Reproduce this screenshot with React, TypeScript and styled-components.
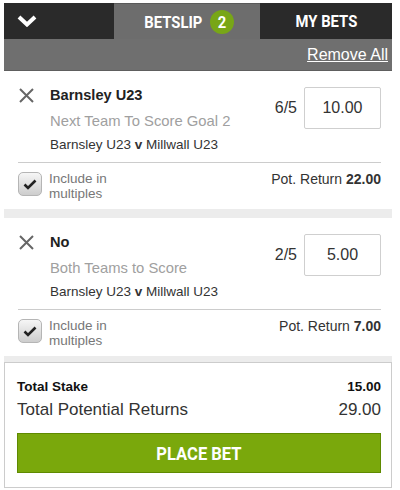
import styled, { createGlobalStyle } from 'styled-components'

const GlobalStyle = createGlobalStyle`
  body {
    margin: 0;
    background: #ffffff;
    font-family: 'Liberation Sans', Arial, sans-serif;
  }
`

type Bet = {
  selection: string
  market: string
  home: string
  away: string
  odds: string
  stake: string
  potReturn: string
}

const bets: Bet[] = [
  {
    selection: 'Barnsley U23',
    market: 'Next Team To Score Goal 2',
    home: 'Barnsley U23',
    away: 'Millwall U23',
    odds: '6/5',
    stake: '10.00',
    potReturn: '22.00',
  },
  {
    selection: 'No',
    market: 'Both Teams to Score',
    home: 'Barnsley U23',
    away: 'Millwall U23',
    odds: '2/5',
    stake: '5.00',
    potReturn: '7.00',
  },
]

const Page = styled.div`
  padding: 3px 8px 2px 4px;
`

const Slip = styled.div`
  display: flex;
  flex-direction: column;
  background: #ececec;
`

const TabBar = styled.div`
  display: flex;
  height: 36px;
  background: #2a2a2a;
`

const Collapse = styled.div`
  width: 110px;
  display: flex;
  align-items: center;
  padding-left: 13px;
  box-sizing: border-box;
`

const Tab = styled.div<{ $active?: boolean }>`
  display: flex;
  align-items: center;
  justify-content: center;
  gap: 4px;
  width: ${(p) => (p.$active ? '146px' : '132px')};
  background: ${(p) => (p.$active ? '#6d6d6d' : 'transparent')};
  color: #ffffff;
  font-family: 'Roboto', 'Liberation Sans', sans-serif;
  font-weight: bold;
  font-size: 17px;
  border-top: ${(p) => (p.$active ? '1px solid #5a5a5a' : 'none')};
`

// the reference uses a condensed face, squeeze Roboto to match
const Narrow = styled.span`
  display: inline-block;
  transform: scaleX(0.87);
`

const Badge = styled.span`
  display: inline-flex;
  align-items: center;
  justify-content: center;
  width: 24px;
  height: 24px;
  border-radius: 50%;
  background: #78a617;
  font-size: 17px;
`

const ActionBar = styled.div`
  display: flex;
  justify-content: flex-end;
  align-items: center;
  height: 31px;
  padding-right: 4px;
  background: #6f6f6f;
  border-bottom: 1px solid #5e5e5e;
`

const RemoveAll = styled.a`
  color: #ffffff;
  font-size: 16px;
  text-decoration: underline;
  cursor: pointer;
`

const Card = styled.div`
  background: #ffffff;
  padding: 16px 11px 0 14px;
  height: 138px;
  box-sizing: border-box;
  & + & {
    margin-top: 9px;
  }
`

const BetTop = styled.div`
  display: flex;
  align-items: flex-start;
  padding-bottom: 9px;
  border-bottom: 1px solid #cccccc;
`

const RemoveBtn = styled.div`
  width: 32px;
  padding-top: 1px;
  padding-left: 1px;
  box-sizing: border-box;
`

const Info = styled.div`
  flex: 1;
  display: flex;
  flex-direction: column;
`

const Selection = styled.div`
  font-weight: bold;
  font-size: 14.6px;
  color: #222222;
  line-height: 17px;
`

const Market = styled.div`
  margin-top: 8px;
  font-size: 14.8px;
  color: #a0a0a0;
  line-height: 18px;
`

const Match = styled.div`
  margin-top: 6px;
  font-size: 13.5px;
  color: #333333;
  line-height: 17px;
  b {
    font-weight: bold;
  }
`

const Price = styled.div`
  display: flex;
  align-items: center;
  gap: 7px;
`

const Odds = styled.span`
  font-size: 16px;
  color: #333333;
`

const StakeBox = styled.div`
  width: 77px;
  height: 42px;
  box-sizing: border-box;
  border: 1px solid #cfcfcf;
  border-radius: 2px;
  display: flex;
  align-items: center;
  justify-content: center;
  font-size: 16px;
  color: #333333;
`

const BetBottom = styled.div`
  display: flex;
  justify-content: space-between;
  align-items: flex-start;
  padding-top: 8px;
`

const Multiples = styled.label`
  display: flex;
  align-items: flex-start;
  gap: 7px;
  font-size: 13.5px;
  line-height: 15px;
  color: #777777;
`

const CheckBox = styled.span`
  margin-top: 1px;
  width: 24px;
  height: 24px;
  box-sizing: border-box;
  border: 1px solid #b5b5b5;
  border-radius: 5px;
  background: linear-gradient(#f6f6f6, #cdcdcd);
  display: flex;
  align-items: center;
  justify-content: center;
`

const PotReturn = styled.div`
  font-size: 14px;
  color: #333333;
  b {
    font-weight: bold;
  }
`

const Footer = styled.div`
  margin-top: 6px;
  background: #ffffff;
  border: 1px solid #cccccc;
  padding: 15px 10px 14px 12px;
`

const TotalRow = styled.div<{ $big?: boolean }>`
  display: flex;
  justify-content: space-between;
  color: ${(p) => (p.$big ? '#333333' : '#111111')};
  font-size: ${(p) => (p.$big ? '17px' : '13.5px')};
  font-weight: ${(p) => (p.$big ? 'normal' : 'bold')};
  line-height: ${(p) => (p.$big ? '23px' : '17px')};
  margin-top: ${(p) => (p.$big ? '3px' : '0')};
`

const PlaceBet = styled.button`
  display: block;
  width: 100%;
  height: 40px;
  margin-top: 12px;
  background: #7aa80c;
  border: 1px solid #5f8a00;
  color: #ffffff;
  font-family: 'Roboto', 'Liberation Sans', sans-serif;
  font-weight: bold;
  font-size: 19px;
  cursor: pointer;
`

const CloseIcon = () => (
  <svg width="15" height="15" viewBox="0 0 15 15">
    <path d="M1 1 L14 14 M14 1 L1 14" stroke="#666666" strokeWidth="2" fill="none" />
  </svg>
)

const Chevron = () => (
  <svg width="20" height="12" viewBox="0 0 20 12">
    <polyline points="2,2 10,9.5 18,2" stroke="#ffffff" strokeWidth="4" fill="none" />
  </svg>
)

const Tick = () => (
  <svg width="14" height="11" viewBox="0 0 14 11">
    <polyline points="1.5,5.5 5,9 12.5,1.5" stroke="#222222" strokeWidth="2.6" fill="none" />
  </svg>
)

const BetCard = ({ bet }: { bet: Bet }) => (
  <Card>
    <BetTop>
      <RemoveBtn>
        <CloseIcon />
      </RemoveBtn>
      <Info>
        <Selection>{bet.selection}</Selection>
        <Market>{bet.market}</Market>
        <Match>
          {bet.home} <b>v</b> {bet.away}
        </Match>
      </Info>
      <Price>
        <Odds>{bet.odds}</Odds>
        <StakeBox>{bet.stake}</StakeBox>
      </Price>
    </BetTop>
    <BetBottom>
      <Multiples>
        <CheckBox>
          <Tick />
        </CheckBox>
        <span>
          Include in
          <br />
          multiples
        </span>
      </Multiples>
      <PotReturn>
        Pot. Return <b>{bet.potReturn}</b>
      </PotReturn>
    </BetBottom>
  </Card>
)

const App = () => {
  return (
    <Page>
      <GlobalStyle />
      <Slip>
        <TabBar>
          <Collapse>
            <Chevron />
          </Collapse>
          <Tab $active>
            <Narrow>BETSLIP</Narrow>
            <Badge>
              <Narrow>2</Narrow>
            </Badge>
          </Tab>
          <Tab>
            <Narrow>MY BETS</Narrow>
          </Tab>
        </TabBar>
        <ActionBar>
          <RemoveAll>Remove All</RemoveAll>
        </ActionBar>
        {bets.map((bet) => (
          <BetCard bet={bet} key={bet.market} />
        ))}
        <Footer>
          <TotalRow>
            <span>Total Stake</span>
            <span>15.00</span>
          </TotalRow>
          <TotalRow $big>
            <span>Total Potential Returns</span>
            <span>29.00</span>
          </TotalRow>
          <PlaceBet>
            <Narrow>PLACE BET</Narrow>
          </PlaceBet>
        </Footer>
      </Slip>
    </Page>
  )
}

export default App
